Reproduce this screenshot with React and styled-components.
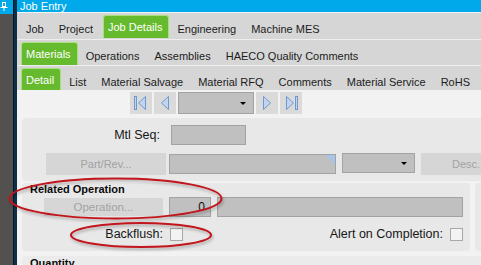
import React from 'react';
import styled, { createGlobalStyle } from 'styled-components';

const Global = createGlobalStyle`
  html, body { margin: 0; padding: 0; width: 481px; height: 265px; overflow: hidden; background: #f2f2f2; }
  body { font-family: "Liberation Sans", Arial, sans-serif; font-size: 11px; color: #1a1a1a; }
  #root { height: 265px; }
  * { box-sizing: border-box; }
`;

const Frame = styled.div`
  position: relative;
  display: flex;
  width: 481px;
  height: 265px;
  overflow: hidden;
`;

const SidePane = styled.div`
  width: 13px;
  flex: none;
  background: #53514f;
  display: flex;
  flex-direction: column;
`;

const PinCap = styled.div`
  height: 14px;
  background: #00a9ea;
  display: flex;
  align-items: flex-start;
`;

const Divider = styled.div`
  width: 4px;
  flex: none;
  background: #0d3048;
  border-left: 1px solid #05182a;
`;

const Main = styled.div`
  flex: 1;
  min-width: 0;
  display: flex;
  flex-direction: column;
  background: #f2f2f2;
`;

const TitleBar = styled.div`
  height: 15px;
  background: #00a9ea;
  color: #fff;
  padding-left: 3px;
  line-height: 12px;
  border-bottom: 1px solid #f4f4f4;
  white-space: nowrap;
`;

const TabRow = styled.div`
  display: flex;
  align-items: flex-end;
  gap: 3px;
  padding: 2px 0 ${p => p.$pb}px 4px;
  background: #d6d6d6;
  border-bottom: ${p => (p.$sep ? '1px solid #eeeeee' : 'none')};
  white-space: nowrap;
`;

const Tab = styled.div`
  height: ${p => p.$h}px;
  flex: none;
  display: flex;
  align-items: center;
  padding: ${p => (p.$active ? 0 : 4)}px 6px 0 4px;
  color: ${p => (p.$active ? '#ffffff' : '#1c1c1c')};
  background: ${p => (p.$active ? '#66ba2d' : 'transparent')};
  border: 1px solid ${p => (p.$active ? '#a8e07e' : 'transparent')};
  border-bottom: none;
  border-radius: 3px 3px 0 0;
`;

const Content = styled.div`
  flex: 1;
  display: flex;
  flex-direction: column;
  padding-top: 2px;
`;

const NavBar = styled.div`
  display: flex;
  gap: 2px;
  padding-left: 113px;
  height: 22px;
  margin-bottom: 4px;
`;

const NavBtn = styled.div`
  width: 22px;
  height: 22px;
  flex: none;
  background: #dadada;
  display: flex;
  align-items: center;
  justify-content: center;
`;

const Select = styled.div`
  width: ${p => p.$w}px;
  height: ${p => p.$h}px;
  flex: none;
  margin-left: ${p => p.$ml || 0}px;
  align-self: ${p => (p.$top ? 'flex-start' : 'auto')};
  background: #c0c0c0;
  border: 1px solid #a3a3a3;
  display: flex;
  align-items: center;
  justify-content: flex-end;
  padding-right: 7px;
`;

const Caret = styled.span`
  width: 0;
  height: 0;
  border-left: 3px solid transparent;
  border-right: 3px solid transparent;
  border-top: 3px solid #000;
`;

const Panel = styled.div`
  margin-left: 5px;
  background: #e8e8e8;
  border-radius: ${p => p.$radius || '4px'};
  display: flex;
  flex-direction: column;
`;

const TopPanel = styled(Panel)`
  padding: 7px 0 6px;
  gap: 8px;
`;

const FieldRow = styled.div`
  display: flex;
  align-items: center;
  gap: ${p => p.$gap}px;
  padding-left: ${p => p.$pl || 0}px;
  padding-right: ${p => p.$pr || 0}px;
  margin-top: ${p => p.$mt || 0}px;
  height: ${p => p.$h}px;
  white-space: nowrap;
`;

const Label = styled.div`
  flex: none;
  width: ${p => (p.$w ? `${p.$w}px` : 'auto')};
  margin-left: ${p => (p.$push ? 'auto' : '0')};
  text-align: right;
  font-size: 12.5px;
  color: #161616;
`;

const Input = styled.div`
  position: relative;
  flex: none;
  width: ${p => p.$w}px;
  height: ${p => p.$h}px;
  background: #c0c0c0;
  border: 1px solid #a3a3a3;
  display: flex;
  align-items: center;
  justify-content: flex-end;
  padding-right: 5px;
  font-size: 12px;
  color: #111;
  overflow: hidden;
`;

const Flag = styled.span`
  position: absolute;
  top: 0;
  right: 0;
  width: 0;
  height: 0;
  border-top: 10px solid #a9c4e6;
  border-left: 10px solid transparent;
`;

const Button = styled.div`
  width: ${p => p.$w}px;
  height: ${p => p.$h}px;
  flex: none;
  margin-left: ${p => p.$ml || 0}px;
  background: #d6d6d6;
  color: #a2a2a2;
  font-size: ${p => p.$fs || 11}px;
  display: flex;
  align-items: center;
  justify-content: ${p => (p.$left ? 'flex-start' : 'center')};
  padding-left: ${p => (p.$left ? 31 : 0)}px;
`;

const Check = styled.div`
  width: 13px;
  height: 13px;
  flex: none;
  background: #f3f3f3;
  border: 1px solid #a8a8a8;
`;

const BottomRow = styled.div`
  display: flex;
  gap: 5px;
  margin-top: 2px;
  height: 68px;
  flex: none;
`;

const GroupPanel = styled(Panel)`
  width: 448px;
  flex: none;
`;

const SidePanel = styled.div`
  flex: 1;
  background: #e8e8e8;
  border-radius: 4px 0 0 4px;
`;

const GroupTitle = styled.div`
  font-weight: bold;
  padding-left: 8px;
  line-height: 13px;
  color: #0a0a0a;
  white-space: nowrap;
`;

const QtyPanel = styled(Panel)`
  margin-top: 5px;
  flex: 1;
  padding-top: 1px;
  border-radius: 4px 0 0 0;
  background: #ebebeb;
`;

const Overlay = styled.svg`
  position: absolute;
  left: 0;
  top: 0;
  pointer-events: none;
`;

const navStroke = '#6f98d0';
const navFill = '#c3d4ee';

const NavIcon = ({ kind }) => (
  <svg width="22" height="22" viewBox="0 0 22 22">
    {kind === 'first' && (
      <g fill={navFill} stroke={navStroke} strokeWidth="1">
        <rect x="4.5" y="4.5" width="2" height="13" />
        <path d="M8.5 11 L15.5 4.5 L15.5 17.5 Z" />
      </g>
    )}
    {kind === 'prev' && (
      <path d="M7.5 11 L14.5 4.5 L14.5 17.5 Z" fill={navFill} stroke={navStroke} />
    )}
    {kind === 'next' && (
      <path d="M14.5 11 L7.5 4.5 L7.5 17.5 Z" fill={navFill} stroke={navStroke} />
    )}
    {kind === 'last' && (
      <g fill={navFill} stroke={navStroke} strokeWidth="1">
        <path d="M13.5 11 L6.5 4.5 L6.5 17.5 Z" />
        <rect x="15.5" y="4.5" width="2" height="13" />
      </g>
    )}
  </svg>
);

const PinIcon = () => (
  <svg width="9" height="12" viewBox="0 0 9 12">
    <g fill="none" stroke="#fff" strokeWidth="1">
      <rect x="2.5" y="2.5" width="3" height="4" />
      <path d="M0.5 7.5 H7.5" />
      <path d="M4 7.5 V11" />
    </g>
  </svg>
);

const rows = [
  { pb: 1, sep: true, h: 23, tabs: ['Job', 'Project', 'Job Details', 'Engineering', 'Machine MES'], active: 2 },
  { pb: 0, sep: true, h: 23, tabs: ['Materials', 'Operations', 'Assemblies', 'HAECO Quality Comments'], active: 0 },
  { pb: 0, sep: false, h: 22, tabs: ['Detail', 'List', 'Material Salvage', 'Material RFQ', 'Comments', 'Material Service', 'RoHS'], active: 0 },
];

export default function App() {
  return (
    <>
      <Global />
      <Frame>
        <SidePane>
          <PinCap>
            <PinIcon />
          </PinCap>
        </SidePane>
        <Divider />
        <Main>
          <TitleBar>Job Entry</TitleBar>
          {rows.map((r, i) => (
            <TabRow key={i} $pb={r.pb} $sep={r.sep}>
              {r.tabs.map((t, j) => (
                <Tab key={t} $h={r.h} $active={j === r.active}>{t}</Tab>
              ))}
            </TabRow>
          ))}
          <Content>
            <NavBar>
              <NavBtn><NavIcon kind="first" /></NavBtn>
              <NavBtn><NavIcon kind="prev" /></NavBtn>
              <Select $w={76} $h={22}><Caret /></Select>
              <NavBtn><NavIcon kind="next" /></NavBtn>
              <NavBtn><NavIcon kind="last" /></NavBtn>
            </NavBar>
            <TopPanel $radius="4px 0 0 4px">
              <FieldRow $gap={11} $h={20}>
                <Label $w={138}>Mtl Seq:</Label>
                <Input $w={75} $h={20} />
              </FieldRow>
              <FieldRow $gap={3} $pl={24} $h={22}>
                <Button $w={120} $h={22}>Part/Rev...</Button>
                <Input $w={167} $h={20}><Flag /></Input>
                <Select $w={73} $h={20} $ml={3} $top><Caret /></Select>
                <Button $w={80} $h={22} $fs={11} $left $ml={3}>Desc.</Button>
              </FieldRow>
            </TopPanel>
            <BottomRow>
              <GroupPanel>
                <GroupTitle>Related Operation</GroupTitle>
                <FieldRow $gap={6} $pl={22} $h={20} $mt={1}>
                  <Button $w={119} $h={18} $fs={11.5}>Operation...</Button>
                  <Input $w={42} $h={20}>0</Input>
                  <Input $w={246} $h={20} />
                </FieldRow>
                <FieldRow $gap={7} $h={14} $mt={10} $pr={7}>
                  <Label $w={141}>Backflush:</Label>
                  <Check />
                  <Label $push>Alert on Completion:</Label>
                  <Check />
                </FieldRow>
              </GroupPanel>
              <SidePanel />
            </BottomRow>
            <QtyPanel>
              <GroupTitle>Quantity</GroupTitle>
            </QtyPanel>
          </Content>
        </Main>
        <Overlay width="481" height="265" viewBox="0 0 481 265">
          <defs>
            <filter id="sh" x="-10%" y="-30%" width="120%" height="160%">
              <feDropShadow dx="1" dy="2" stdDeviation="1.5" floodColor="#000" floodOpacity="0.3" />
            </filter>
          </defs>
          <g fill="none" stroke="#c0141c" strokeWidth="2" filter="url(#sh)">
            <ellipse cx="115.5" cy="198.5" rx="106" ry="20" />
            <ellipse cx="141" cy="235" rx="70" ry="12" />
          </g>
        </Overlay>
      </Frame>
    </>
  );
}
